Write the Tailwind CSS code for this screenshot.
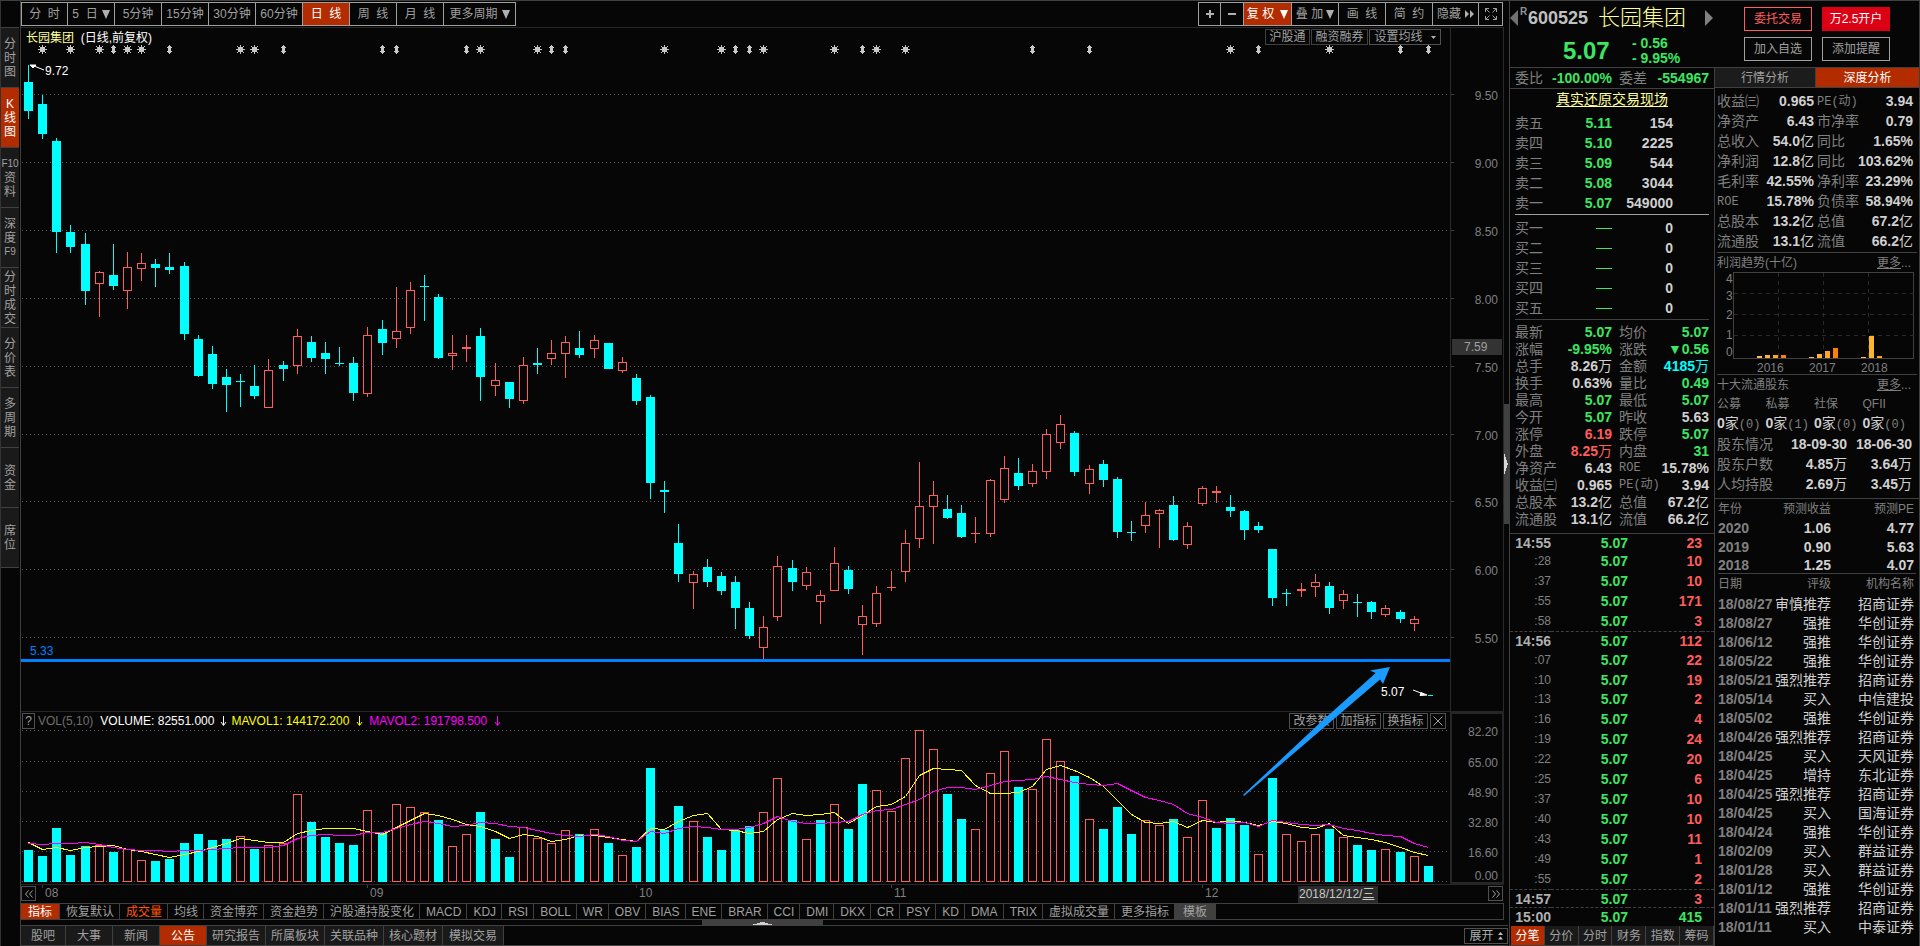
<!DOCTYPE html>
<html lang="zh-CN">
<head>
<meta charset="utf-8">
<title>长园集团 600525 日线</title>
<script src="https://cdn.jsdelivr.net/npm/@tailwindcss/browser@4"></script>
</head>
<body class="bg-[#060606] text-[#a0a0a0] text-xs leading-none font-['Liberation_Sans','Noto_Sans_CJK_SC',sans-serif] overflow-hidden">
<div class="flex h-screen border-t border-[#404040] whitespace-nowrap">

  <!-- side navigation -->
  <nav class="w-[21px] shrink-0 border-l border-l-[#333] border-r border-r-[#404040] pr-px pt-[26px]" id="side"></nav>

  <!-- chart column -->
  <main class="flex-1 min-w-0 flex flex-col">
    <header class="h-[27px] shrink-0 border-b border-[#262626] flex justify-between pt-px pb-px">
      <div class="flex border border-[#a0a0a0] divide-x divide-[#a0a0a0]" id="periods"></div>
      <div class="flex border border-[#a0a0a0] divide-x divide-[#a0a0a0] mr-px">
        <button class="w-[22px] flex items-center justify-center" aria-label="放大"><svg class="w-2 h-2" viewBox="0 0 8 8"><path d="M3 0h2v3h3v2H5v3H3V5H0V3h3z" fill="#b0b0b0"/></svg></button>
        <button class="w-[23px] flex items-center justify-center" aria-label="缩小"><svg class="w-2 h-2" viewBox="0 0 8 8"><path d="M0 3h8v2H0z" fill="#b0b0b0"/></svg></button>
        <button class="w-[48px] bg-[#b32c00] text-white flex items-center justify-center gap-[6px]">复 权<svg class="w-2 h-[9px]" viewBox="0 0 8 9"><path d="M0 0h8L4 9z" fill="#fff"/></svg></button>
        <button class="w-[47px] flex items-center justify-center gap-[3px]">叠 加<svg class="w-2 h-[9px]" viewBox="0 0 8 9"><path d="M0 0h8L4 9z" fill="#b0b0b0"/></svg></button>
        <button class="w-[47px]">画&nbsp; 线</button>
        <button class="w-[47px]">简&nbsp; 约</button>
        <button class="w-[46px] flex items-center justify-center gap-1">隐藏<svg class="w-[9px] h-2" viewBox="0 0 9 8"><path d="M0 0l4 4-4 4zM5 0l4 4-4 4z" fill="#b0b0b0"/></svg></button>
        <button class="w-[23px] flex items-center justify-center" aria-label="全屏"><svg class="w-3 h-3" viewBox="0 0 12 12" fill="none" stroke="#a0a0a0"><path d="M.5 4V.5H4M.5.5l4 4M8 .5h3.500V4M11.500.5l-4 4M.5 8v3.500H4M.5 11.500l4-4M8 11.500h3.500V8M11.500 11.500l-4-4"/></svg></button>
      </div>
    </header>

    <div class="relative flex-1 min-h-0 flex flex-col">
      <!-- price panel -->
      <section class="flex grow-[683] basis-px min-h-0 border-b border-[#262626]">
        <div class="relative flex-1">
          <svg id="price" class="absolute inset-0 w-full h-full" viewBox="21 28 1429 683" preserveAspectRatio="none" shape-rendering="crispEdges"></svg>
          <div class="relative flex justify-between pl-[5px] pr-[9px] pt-px">
            <h1 class="pt-[3px] text-white"><span class="text-[#ffff9c]">长园集团</span>&nbsp; (日线,前复权)</h1>
            <div class="flex gap-px">
              <button class="h-4 w-[45px] border border-[#404040]">沪股通</button>
              <button class="h-4 w-[57px] border border-[#404040]">融资融券</button>
              <button class="h-4 w-[72px] border border-[#505050] flex items-center justify-center gap-2">设置均线<svg class="w-[5px] h-[3px]" viewBox="0 0 5 3"><path d="M0 0h5L2.500 3z" fill="#b0b0b0"/></svg></button>
            </div>
          </div>
          <div id="priceNotes"></div>
        </div>
        <div class="relative w-[54px] border-x border-[#2a2a2a] text-[#808080]" id="priceAxis"></div>
      </section>
      <!-- volume panel -->
      <section class="flex grow-[172] basis-px min-h-0 border-b border-[#262626]">
        <div class="relative flex-1">
          <svg id="vol" class="absolute inset-0 w-full h-full" viewBox="21 712 1429 172" preserveAspectRatio="none" shape-rendering="crispEdges"></svg>
          <div class="relative flex justify-between pl-px pr-1 pt-px">
            <div class="flex items-center">
              <button class="w-[13px] h-4 border border-[#505050]">?</button>
              <span class="ml-[3px] text-[#6e6e6e]">VOL(5,10)</span>
              <span class="ml-[7px] text-white">VOLUME: 82551.000</span>
              <svg class="ml-[6px] w-[7px] h-3" viewBox="0 0 7 12"><path d="M3.500 1v9M1 7l2.500 3.500L6 7" stroke="#fff" fill="none"/></svg>
              <span class="ml-[4px] text-[#ffff00]">MAVOL1: 144172.200</span>
              <svg class="ml-[7px] w-[7px] h-3" viewBox="0 0 7 12"><path d="M3.500 1v9M1 7l2.500 3.500L6 7" stroke="#ff0" fill="none"/></svg>
              <span class="ml-[6px] text-[#ff00ff]">MAVOL2: 191798.500</span>
              <svg class="ml-[7px] w-[7px] h-3" viewBox="0 0 7 12"><path d="M3.500 1v9M1 7l2.500 3.500L6 7" stroke="#f0f" fill="none"/></svg>
            </div>
            <div class="flex gap-[2px]">
              <button class="h-4 w-[45px] border border-[#505050]">改参数</button>
              <button class="h-4 w-[45px] border border-[#505050]">加指标</button>
              <button class="h-4 w-[45px] border border-[#505050]">换指标</button>
              <button class="h-4 w-4 border border-[#505050] flex items-center justify-center" aria-label="关闭"><svg class="w-[10px] h-[10px]" viewBox="0 0 10 10"><path d="M.5.5l9 9M9.500.5l-9 9" stroke="#a0a0a0"/></svg></button>
            </div>
          </div>
        </div>
        <div class="relative w-[54px] border-2 border-[#262626] text-[#808080]" id="volAxis"></div>
      </section>
      <!-- hand-drawn arrow crossing both panels -->
      <svg class="absolute inset-y-0 left-0 w-[calc(100%-54px)] h-full pointer-events-none" viewBox="21 28 1429 857" preserveAspectRatio="none"><path d="M1390 667L1370 670.500L1375.700 673L1322 721L1243 795L1244 796L1335 718L1380 679.500L1383 684z" fill="#1a9bff"/></svg>
    </div>

    <!-- date axis -->
    <div class="relative h-[18px] shrink-0 flex justify-between items-start pt-px pr-px text-[#808080]">
      <button class="w-[15px] h-[15px] border border-[#505050] flex items-center justify-center" aria-label="向前"><svg class="w-2 h-2" viewBox="0 0 8 8"><path d="M3.500.5L.5 4l3 3.500M7.500.5l-3 3.500 3 3.500" stroke="#a0a0a0" fill="none"/></svg></button>
      <div id="months"></div>
      <button class="w-[15px] h-[15px] border border-[#505050] flex items-center justify-center" aria-label="向后"><svg class="w-2 h-2" viewBox="0 0 8 8"><path d="M.5.5l3 3.500-3 3.500M4.500.5l3 3.500-3 3.500" stroke="#a0a0a0" fill="none"/></svg></button>
    </div>

    <div class="h-[17px] shrink-0 border-y border-r border-[#404040] flex" id="indicators"></div>
    <div class="h-[5px] shrink-0 flex justify-center">
      <div class="w-[121px] h-full bg-[#404040] flex justify-center items-end"><svg class="w-[19px] h-1" viewBox="0 0 19 4"><path d="M0 4h19v-1h-4v-1h-3v-1h-5v1h-3v1H0z" fill="#d0d0d0"/></svg></div>
    </div>
    <footer class="h-[21px] shrink-0 border-y border-[#404040] flex justify-between -mr-1">
      <div class="flex" id="bottomTabs"></div>
      <button class="w-[44px] h-[16px] mt-[2px] border border-[#505050] flex items-center justify-center gap-1 text-[#b0b0b0]">展开<svg class="w-[5px] h-2" viewBox="0 0 5 8"><path d="M2.500 0L5 3H0zM2.500 4.500L5 7.500H0z" fill="#c0c0c0"/></svg></button>
    </footer>
  </main>

  <!-- splitter -->
  <div class="w-[5px] shrink-0 flex flex-col justify-center">
    <div class="h-[120px] mb-[20px] bg-[#404040] flex items-center"><svg class="w-1 h-5" viewBox="0 0 4 20"><path d="M0 0h1v3h1v3h1v3h1v2h-1v3h-1v3h-1v3H0z" fill="#d8d8d8"/></svg></div>
  </div>

  <!-- quote panel -->
  <aside class="w-[411px] shrink-0 border-x border-[#404040] flex flex-col text-sm leading-none text-[#808080]">
    <header class="h-[66px] shrink-0 flex">
      <div class="w-[203px]">
        <div class="h-[34px] flex items-center">
          <svg class="w-2 h-4" viewBox="0 0 8 16"><path d="M8 0v16L0 8z" fill="#707070"/></svg>
          <span class="ml-[2px] mb-3 w-2 text-[10px] font-bold text-[#909090]">R</span>
          <span class="text-lg leading-none font-bold text-[#c0c0c0]">600525</span>
          <h2 class="ml-[10px] text-[22px] leading-none font-light text-[#ffff9c]">长园集团</h2>
          <svg class="ml-auto w-2 h-4" viewBox="0 0 8 16"><path d="M0 0v16l8-8z" fill="#808080"/></svg>
        </div>
        <div class="h-[32px] flex items-center pl-[53px] font-bold text-[#3ce662]">
          <span class="w-[69px] text-2xl leading-none">5.07</span>
          <span class="leading-[15px]">- 0.56<br>- 9.95%</span>
        </div>
      </div>
      <div class="ml-[31px] mt-[6px] grid grid-cols-[68px_68px] grid-rows-[24px_24px] gap-x-[10px] gap-y-[6px] text-xs leading-none">
        <button class="border border-[#ff5c5c] text-[#ff5c5c]">委托交易</button>
        <button class="bg-[#dc0014] text-white">万2.5开户</button>
        <button class="border border-[#a0a0a0] text-[#a0a0a0]">加入自选</button>
        <button class="border border-[#a0a0a0] text-[#a0a0a0]">添加提醒</button>
      </div>
    </header>
    <div class="flex flex-1 min-h-0 border-t border-[#404040]">
      <!-- order book, figures, ticks -->
      <section class="w-[204px] shrink-0 flex flex-col">
        <div class="h-[21px] shrink-0 border-b border-[#404040] flex items-center pl-[5px] pr-[5px]">
          <span>委比</span><b class="w-[69px] shrink-0 text-right text-[#3ce662]">-100.00%</b><span class="ml-[7px]">委差</span><b class="flex-1 text-right text-[#3ce662]">-554967</b>
        </div>
        <a href="#" class="h-6 shrink-0 pt-[3px] text-center text-[#ffff9c] underline underline-offset-2">真实还原交易现场</a>
        <table class="table-fixed w-full" id="asks"></table>
        <div class="mx-[5px] my-px mb-[3px] h-px shrink-0 bg-[#a0a0a0]"></div>
        <table class="table-fixed w-full" id="bids"></table>
        <div class="mx-[5px] mt-px mb-[3px] h-px shrink-0 bg-[#404040]"></div>
        <table class="table-fixed w-full" id="stats"></table>
        <div class="mt-[6px] h-px shrink-0 bg-[#404040]"></div>
        <div class="flex-1 min-h-0"><table class="table-fixed w-full h-full border-collapse" id="ticks"></table></div>
        <div class="h-5 shrink-0 flex text-xs border-b border-[#404040] pl-px" id="tickTabs"></div>
      </section>
      <!-- fundamentals -->
      <section class="flex-1 min-w-0 border-l border-[#404040]">
        <div class="h-5 flex text-xs leading-none border-b border-[#404040]">
          <button class="w-[101px] bg-[#1c1c1c] text-[#a0a0a0] border-r border-[#404040]">行情分析</button>
          <button class="flex-1 bg-[#b32c00] text-white">深度分析</button>
        </div>
        <table class="table-fixed w-full mt-[3px]" id="fin"></table>
        <div class="mx-[2px] mt-px border-t border-[#404040] h-5 flex items-center justify-between pr-[6px] text-xs leading-none"><span>利润趋势(十亿)</span><a href="#"><u>更多</u>...</a></div>
        <svg class="w-full h-[102px] block" viewBox="1715 272 204 102" id="profit" font-size="12" fill="#808080"></svg>
        <div class="mx-[2px] border-t border-[#404040] h-5 flex items-center justify-between pr-[6px] text-xs leading-none"><span>十大流通股东</span><a href="#"><u>更多</u>...</a></div>
        <table class="table-fixed w-[194px] ml-[2px]" id="holders"></table>
        <table class="table-fixed w-full" id="holderStats"></table>
        <div class="mt-1 h-px bg-[#404040]"></div>
        <table class="table-fixed w-full" id="forecast"></table>
        <div class="mx-[3px] h-px bg-[#404040]"></div>
        <table class="table-fixed w-full" id="ratings"></table>
      </section>
    </div>
  </aside>
</div>

<script>
const $ = id => document.getElementById(id);
const put = (id, html) => { $(id).innerHTML = html; };

/* ---------- navigation ---------- */
put('side', [['分','时','图'],['K','线','图'],['F10','资','料'],['深','度','F9'],['分','时','成','交'],['分','价','表'],['多','周','期'],['资','金'],['席','位']]
  .map((t,i) => `<button class="block w-full h-[60px] border-t border-[#404040] leading-[14px] ${i===1?'bg-[#b32c00] text-white':'bg-[#1a1a1a] text-[#a0a0a0]'}">${t.map(c => c.length>1?`<span class="block text-[10px]">${c}</span>`:`<span class="block">${c}</span>`).join('')}</button>`).join('') + '<div class="h-px bg-[#404040]"></div>');

const tri = '<svg class="w-2 h-[9px]" viewBox="0 0 8 9"><path d="M0 0h8L4 9z" fill="#b0b0b0"/></svg>';
put('periods', ['分&nbsp; 时','5&nbsp; 日'+tri,'5分钟','15分钟','30分钟','60分钟','日&nbsp; 线','周&nbsp; 线','月&nbsp; 线','更多周期'+tri]
  .map((t,i) => `<button class="flex items-center justify-center gap-1 ${i===9?'w-[71px]':i===0?'w-[46px]':'w-[47px]'} ${i===6?'bg-[#b32c00] text-white':''}">${t}</button>`).join(''));

put('indicators', '指标 恢复默认 成交量 均线 资金博弈 资金趋势 沪股通持股变化 MACD KDJ RSI BOLL WR OBV BIAS ENE BRAR CCI DMI DKX CR PSY KD DMA TRIX 虚拟成交量 更多指标 模板'.split(' ')
  .map((t,i,a) => `<button class="border-r border-[#404040] ${i===0?'bg-[#b32c00] text-white px-[7px]':i===2?'text-[#ff5500] pl-[6px] pr-[5px]':i===a.length-1?'bg-[#404040] px-2':'pl-[6px] pr-[5px]'}">${t}</button>`).join(''));

put('bottomTabs', '股吧 大事 新闻 公告 研究报告 所属板块 关联品种 核心题材 模拟交易'.split(' ')
  .map((t,i) => `<button class="border-r border-[#404040] ${i===0?'w-[45px]':i<4?'w-[47px]':i===8?'w-[61px]':'w-[59px]'} ${i===3?'bg-[#b32c00] text-white':'bg-[#1a1a1a]'}">${t}</button>`).join(''));

put('tickTabs', '分笔 分价 分时 财务 指数 筹码'.split(' ')
  .map((t,i) => `<button class="flex-1 border-r border-[#404040] ${i===0?'bg-[#b32c00] text-white':'bg-[#1a1a1a] text-[#a0a0a0]'}">${t}</button>`).join(''));

/* ---------- candles: direction, high, body top, body bottom, low ---------- */
const candles = `c65,82,111,119 c95,104,134,139 c138,141,232,253 c225,232,247,253 c233,244,291,305 r271,272,284,317 c244,275,286,290 r252,267,291,309 r253,263,269,281 c259,264,268,287
c253,267,270,274 c262,266,334,340 c335,339,376,377 c346,354,384,389 c369,377,385,412 c374,381,382,407 c365,386,396,399 r359,370,408,408 c361,365,369,381 r329,336,366,374
c336,342,358,362 c342,353,359,374 c347,363,364,366 c357,363,393,401 r327,335,394,397 c320,329,343,355 r287,331,339,348 r282,290,328,334 c275,286,287,321 c294,297,358,359
r335,353,356,370 r335,347,349,362 c328,336,377,401 r363,380,386,396 c382,382,399,408 r357,365,401,404 c348,363,365,374 r340,353,359,365 r336,342,354,378 c331,348,355,358
r335,340,349,358 c343,343,369,369 r357,362,371,373 c374,378,401,405 c395,397,483,499 c481,490,492,513 c524,543,574,582 r571,574,583,609 c559,567,582,587 c572,576,591,595
c576,582,608,629 c602,608,636,639 r616,627,648,660 r556,566,617,621 c560,568,582,591 r567,572,586,590 r590,595,602,624 r547,563,591,591 c566,570,589,594 r605,616,625,655
r586,593,624,627 r571,587,588,591 r530,543,572,582 r462,506,539,548 r481,495,507,544 c495,509,518,519 c505,513,537,538 r517,533,534,543 r479,480,534,537 r456,468,500,503
c458,473,486,490 r464,471,484,487 r429,434,472,479 r415,424,443,449 c431,433,472,476 r465,469,484,494 c460,464,480,487 c477,479,532,538 c521,532,533,541 r502,515,526,533
r509,510,514,548 c496,505,540,541 r522,526,545,549 r486,488,504,506 r486,491,493,503 c495,507,511,517 c510,511,530,540 c522,526,530,533 c549,549,598,606 c589,593,594,606
r583,589,591,597 r574,582,587,597 c582,586,608,614 r590,594,601,609 c594,602,603,617 c601,602,612,619 r605,608,615,617 c610,612,619,623 r616,619,624,631 c695,695,696,696`.split(/\s+/);
const volumes = `c850 c856 c828 c855 c846 r845 c852 r849 r860 c861 c859 c843 c834 c840 c839 r836 c849 r845 r843 r794 c822 c837 c843 c845 r810 c833 r804 r807 r812 c820 r846 r834 c812 c839 c857 r827 r838 r843 r830 c834
r829 c843 r855 c847 c768 c830 c806 r821 c837 c850 c830 c826 r812 r778 c820 r839 c820 r804 c829 c784 r790 r811 r758 r730 r749 c794 c819 r829 r773 r751 c787 r789 r739 r761 c776 r819 c829 c807 c834 r820
r825 c819 r837 r800 c828 c818 c825 r854 c778 r834 r841 r834 c829 r837 c845 c850 r849 c852 r856 c866`.split(/\s+/);
const ma5 = [842,849,847,850,847,846,845,849,851,854,857,854,851,847,843,838,840,842,842,833,830,828,828,828,831,834,827,820,813,815,819,824,826,831,838,834,836,841,839,835,835,837,839,841,828,829,821,815,813,829,830,833,831,819,813,815,814,812,823,815,806,804,796,775,768,769,770,785,793,793,792,786,769,765,770,777,786,800,814,822,823,821,827,820,822,820,822,825,821,823,827,828,823,835,837,839,842,847,852,855];
const ma10 = [843,844,843,843,842,844,847,849,850,850,851,850,850,849,848,847,847,847,845,838,835,834,835,835,832,832,828,824,821,823,826,825,822,823,826,827,830,833,835,836,834,836,840,841,831,833,828,826,827,829,829,827,823,816,821,823,823,822,821,814,810,809,804,799,791,787,787,789,785,781,780,779,776,779,782,784,785,783,790,797,800,804,813,817,822,823,822,826,820,822,824,825,824,828,830,833,835,836,843,847];
const RED = '#ff5c5c', CYAN = '#00ffff';
const px = i => Math.round(28 + 14.14 * i);
const rect = (x,y,w,h,f) => `<rect x="${x}" y="${y}" width="${w}" height="${h}" fill="${f}"/>`;
const hollow = (x,y,w,h) => `<rect x="${x+.5}" y="${y+.5}" width="${w-1}" height="${h-1}" fill="#060606" stroke="${RED}"/>`;
const dots = y => `<line x1="22" x2="1450" y1="${y+.5}" y2="${y+.5}" stroke="#585858" stroke-dasharray="1 3"/>`;
const priceY = [94,162,230,298,366,434,501,569,637];
let s = priceY.map(dots).join('');
candles.forEach((d,i) => {
  const [h,t,b,l] = d.slice(1).split(',').map(Number), x = px(i), w = i===99 ? 5 : 9;
  const c = d[0]==='c' ? CYAN : RED;
  s += rect(x, h, 1, l-h, c);
  s += d[0]==='c' || b-t<3 ? rect(x-4+(9-w), t, w, b-t, c) : hollow(x-4, t, 9, b-t);
});
/* event markers above the candles */
'1* 3* 5* 6I 7* 8* 10I 15* 16* 18I 25I 26I 31I 32* 36* 37I 38I 45* 49* 50I 51I 52* 57* 59I 60* 62* 71I 75I 85* 87I 92* 97I 99I'.split(' ').forEach(m => {
  const x = px(parseInt(m)) , y = 49;
  s += m.endsWith('*')
    ? `<path d="M${x} ${y-4}h1v2h2v2h2v1h-2v2h-2v2h-1v-2h-2v-2h-2v-1h2v-2h2zM${x-3} ${y-3}h1v1h-1zM${x+3} ${y-3}h1v1h-1zM${x-3} ${y+3}h1v1h-1zM${x+3} ${y+3}h1v1h-1zM${x-2} ${y-2}h5v5h-5z" fill="#c8c8c8"/>`
    : `<path d="M${x} ${y-4}h1v1h1v1h1v1h-1v3h1v1h-1v1h-1v1h-1v-1h-1v-1h-1v-1h1v-3h-1v-1h1v-1h1z" fill="#c8c8c8"/>`;
});
s += rect(21,659,1429,3,'#0080ff');
s += '<path d="M30 65l6 0-3 3zM34 66l10 4" fill="#fff" stroke="#fff" shape-rendering="auto"/><path d="M1413 690l8 3M1427 695l-7 .5 1-3z" fill="#fff" stroke="#fff" shape-rendering="auto"/>';
put('price', s);
const pctY = y => ((y-28)/683*100) + '%', pctX = x => ((x-21)/1429*100) + '%';
put('priceAxis', ['9.50','9.00','8.50','8.00','7.50','7.00','6.50','6.00','5.50'].map((t,i) =>
  `<i class="absolute left-0 w-[3px] h-px bg-[#404040]" style="top:${pctY(priceY[i])}"></i><span class="absolute right-[5px] -translate-y-1/2" style="top:${pctY(priceY[i]+2)}">${t}</span>`).join('')
  + `<span class="absolute inset-x-px h-4 leading-4 -translate-y-1/2 bg-[#333] text-[#a0a0a0] pl-3" style="top:${pctY(347)}">7.59</span>`);
put('priceNotes', [[45,71,'9.72','absolute -translate-y-1/2 text-white'],[30,651,'5.33','absolute -translate-y-1/2 text-[#0080ff]'],[1381,692,'5.07','absolute -translate-y-1/2 text-white']]
  .map(([x,y,t,c]) => `<span class="${c}" style="left:${pctX(x)};top:${pctY(y)}">${t}</span>`).join(''));

/* ---------- volume ---------- */
const volY = [730,761,791,821,851,881];
let v = volY.map(dots).join('');
volumes.forEach((d,i) => {
  const y = +d.slice(1), x = px(i)-4;
  v += d[0]==='c' ? rect(x,y,9,882-y,CYAN) : hollow(x,y,9,882-y);
});
const line = (a,c) => `<polyline fill="none" stroke="${c}" points="${a.map((y,i) => (px(i)+.5)+','+(y+.5)).join(' ')}"/>`;
v += line(ma5,'#ffff00') + line(ma10,'#ff00ff');
put('vol', v);
put('volAxis', ['82.20','65.00','48.90','32.80','16.60','0.00'].map((t,i) =>
  `<span class="absolute right-1 -translate-y-1/2" style="top:${((i===5?876:volY[i]+2)-714)/168*100}%">${t}</span>`).join(''));
const pctM = x => ((x-21)/1483*100) + '%';
put('months', [['08',42],['09',367],['10',636],['11',891],['12',1202]].map(([t,x]) =>
  `<span class="absolute top-0 border-l border-[#404040] h-[3px]" style="left:${pctM(x)}"></span><span class="absolute top-[2px]" style="left:${pctM(x+3)}">${t}</span>`).join('')
  + `<span class="absolute top-px h-[17px] w-20 bg-[#2b2b2b] text-[#c8c8c8] leading-4 pl-px" style="left:${pctM(1298)}">2018/12/12/<u>三</u></span>`);

/* ---------- order book ---------- */
const G = 'text-[#3ce662]', R = 'text-[#ff5c5c]', W = 'text-[#d0d0d0]', C = 'text-[#00ffff]';
const cols = (...c) => '<colgroup>' + c.map(k => `<col class="${k}">`).join('') + '</colgroup>';
/* figures are bold, Chinese units stay regular */
const num = t => t.replace(/[^\u4e00-\u9fff▼]+/g, m => `<b>${m}</b>`);
const bookCols = cols('w-[39px]','w-[63px]','w-[61px]','');
put('asks', bookCols + [['五','5.11','154'],['四','5.10','2225'],['三','5.09','544'],['二','5.08','3044'],['一','5.07','549000']]
  .map(([n,p,q]) => `<tr class="h-5"><th class="p-0 pl-[5px] font-normal text-left">卖${n}</th><td class="p-0 text-right font-bold ${G}">${p}</td><td class="p-0 text-right font-bold ${W}">${q}</td><td></td></tr>`).join(''));
put('bids', bookCols + ['一','二','三','四','五']
  .map(n => `<tr class="h-5"><th class="p-0 pl-[5px] font-normal text-left">买${n}</th><td class="p-0"><div class="ml-auto w-4 h-px bg-[#3ce662]"></div></td><td class="p-0 text-right font-bold ${W}">0</td><td></td></tr>`).join(''));
const lab = t => /^(ROE|PE)/.test(t) ? `<span class="text-xs font-['Liberation_Mono','Noto_Sans_CJK_SC',monospace]">${t}</span>` : t;
const statRow = (h,p1,p2) => ([a,b,bc,c,d,dc]) => `<tr class="${h}"><th class="p-0 ${p1} font-normal text-left">${lab(a)}</th><td class="p-0 text-right ${bc}">${num(b)}</td><th class="p-0 ${p2} font-normal text-left">${lab(c)}</th><td class="p-0 text-right ${dc}">${num(d)}</td><td></td></tr>`;
put('stats', cols('w-[44px]','w-[58px]','w-[47px]','w-[50px]','') + [
 ['最新','5.07',G,'均价','5.07',G],['涨幅','-9.95%',G,'涨跌','▼0.56',G],['总手','8.26万',W,'金额','4185万',C],['换手','0.63%',W,'量比','0.49',G],
 ['最高','5.07',G,'最低','5.07',G],['今开','5.07',G,'昨收','5.63',W],['涨停','6.19',R,'跌停','5.07',G],['外盘','8.25万',R,'内盘','31',G],
 ['净资产','6.43',W,'ROE','15.78%',W],['收益㈢','0.965',W,'PE(动)','3.94',W],['总股本','13.2亿',W,'总值','67.2亿',W],['流通股','13.1亿',W,'流值','66.2亿',W]]
 .map(statRow('h-[17px]','pl-[5px]','pl-[7px]')).join(''));
put('ticks', cols('w-[41px]','w-[77px]','w-[74px]','') + '14:55 23|:28 10|:37 10|:55 171|:58 3|14:56 112|:07 22|:10 19|:13 2|:16 4|:19 24|:22 20|:25 6|:37 10|:40 10|:43 11|:49 1|:55 2|14:57 3|15:00 415'.split('|')
 .map((r,i) => { const [t,q] = r.split(' '), m = t[0] !== ':';
   return `<tr class="${m&&i?'border-t border-dashed border-[#404040]':''}"><td class="p-0 text-right ${m?'font-bold text-[#b0b0b0]':'text-xs text-[#808080]'}">${t}</td><td class="p-0 text-right font-bold ${G}">5.07</td><td class="p-0 text-right font-bold ${i===19?G:R}">${q}</td><td></td></tr>`; }).join(''));

/* ---------- fundamentals ---------- */
put('fin', cols('w-[44px]','w-[55px]','w-[44px]','w-[55px]','') + [
 ['收益㈢','0.965',W,'PE(动)','3.94',W],['净资产','6.43',W,'市净率','0.79',W],['总收入','54.0亿',W,'同比','1.65%',W],['净利润','12.8亿',W,'同比','103.62%',W],
 ['毛利率','42.55%',W,'净利率','23.29%',W],['ROE','15.78%',W,'负债率','58.94%',W],['总股本','13.2亿',W,'总值','67.2亿',W],['流通股','13.1亿',W,'流值','66.2亿',W]].map(statRow('h-5','pl-[2px]','pl-[3px]')).join(''));

let p = '<g shape-rendering="crispEdges" fill="none"><path d="M1733.500 272.500h180v86h-180z" stroke="#404040"/><path d="M1734 293.500h180M1734 314.500h180M1734 335.500h180M1778.500 273v85M1823.500 273v85M1868.500 273v85" stroke="#2a2a2a" stroke-dasharray="4 4"/></g>';
p += [[1757,356,'#ffbf4d'],[1765,355,'#ffb42a'],[1773,355,'#ffa51e'],[1781,355,'#ff7f00'],[1809,357,'#ffbf4d'],[1817,354,'#ffb42a'],[1825,351,'#ffa51e'],[1833,348,'#ff7f00'],[1861,357,'#ffbf4d'],[1869,336,'#ffb42a'],[1877,356,'#ffa51e']]
  .map(([x,y,c]) => rect(x,y,5,358-y,c)).join('');
p += [['4',283],['3',300],['2',319],['1',339],['0',356]].map(([t,y]) => `<text x="1726" y="${y}">${t}</text>`).join('');
p += [['2016',1757],['2017',1809],['2018',1861]].map(([t,x]) => `<text x="${x}" y="372">${t}</text>`).join('');
put('profit', p);

put('holders', '<tr class="h-5 text-xs">' + ['公募','私募','社保','QFII'].map(t => `<th class="p-0 font-normal text-left">${t}</th>`).join('') + '</tr><tr class="h-5">'
  + [0,1,0,0].map(n => `<td class="p-0"><span class="${W}"><b>0</b>家</span><span class="text-xs font-['Liberation_Mono']">(${n})</span></td>`).join('') + '</tr>');
put('holderStats', cols('w-[62px]','w-[70px]','w-[65px]','') + [['股东情况','18-09-30','18-06-30'],['股东户数','4.85万','3.64万'],['人均持股','2.69万','3.45万']]
  .map(([a,b,c]) => `<tr class="h-5"><th class="p-0 pl-[2px] font-normal text-left">${a}</th><td class="p-0 text-right ${W}">${num(b)}</td><td class="p-0 text-right ${W}">${num(c)}</td><td></td></tr>`).join(''));

const triCols = cols('w-[59px]','w-[57px]','w-[83px]','');
const head = (h,a,b,c) => `<tr class="${h}"><th class="p-0 pl-[3px] font-normal text-left">${a}</th><th class="p-0 font-normal text-right">${b}</th><th class="p-0 font-normal text-right">${c}</th><td></td></tr>`;
put('forecast', triCols + head('h-[19px] text-xs','年份','预测收益','预测PE') + [['2020','1.06','4.77','h-[19px]'],['2019','0.90','5.63','h-[19px]'],['2018','1.25','4.07','h-[17px]']]
  .map(([a,b,c,h]) => `<tr class="${h} font-bold"><td class="p-0 pl-[3px]">${a}</td><td class="p-0 text-right ${W}">${b}</td><td class="p-0 text-right ${W}">${c}</td><td></td></tr>`).join(''));
put('ratings', triCols + head('h-[20px] text-xs','日期','评级','机构名称') + `08/27 审慎推荐 招商证券|08/27 强推 华创证券|06/12 强推 华创证券|05/22 强推 华创证券|05/21 强烈推荐 招商证券|05/14 买入 中信建投|05/02 强推 华创证券|04/26 强烈推荐 招商证券|04/25 买入 天风证券|04/25 增持 东北证券|04/25 强烈推荐 招商证券|04/25 买入 国海证券|04/24 强推 华创证券|02/09 买入 群益证券|01/28 买入 群益证券|01/12 强推 华创证券|01/11 强烈推荐 招商证券|01/11 买入 中泰证券`.split('|')
  .map(r => { const [a,b,c] = r.split(' '); return `<tr class="h-[19px]"><td class="p-0 pl-[3px] font-bold">18/${a}</td><td class="p-0 text-right ${W}">${b}</td><td class="p-0 text-right ${W}">${c}</td><td></td></tr>`; }).join(''));
</script>
</body>
</html>
